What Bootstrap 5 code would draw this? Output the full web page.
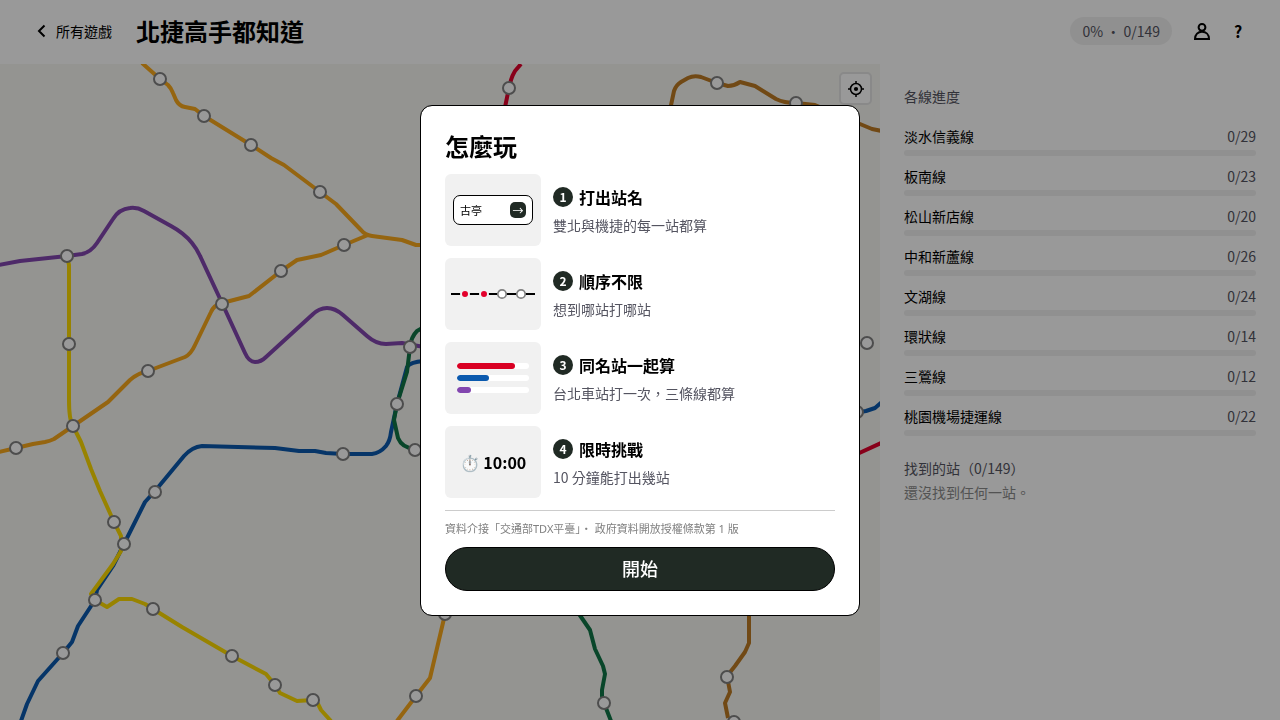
<!DOCTYPE html>
<html lang="zh-TW">
<head>
<meta charset="utf-8">
<meta name="viewport" content="width=device-width, initial-scale=1">
<title>北捷高手都知道</title>
<link href="https://cdn.jsdelivr.net/npm/bootstrap@5.3.0/dist/css/bootstrap.min.css" rel="stylesheet">
<style>
  body { font-family: "Noto Sans CJK TC", "Noto Sans", sans-serif; font-size: 14px; line-height: 20px; color: #000; }
  .site-title { font-size: 24px; line-height: 32px; }
  .site-header { height: 64px; padding: 0 24px 2px 32px; }
  .back-link { color: #000; text-decoration: none; }
  .score-pill { background: #f1f1f1; color: #545460; padding: 4px 12px; }
  .icon-btn { width: 36px; height: 36px; padding: 0; border: 0; font-size: 16px; line-height: 20px; color: #000; }
  .map-area { background: #f7f7f2; min-width: 0; }
  .map-area > svg { position: absolute; inset: 0; width: 100%; height: 100%; }
  .track { fill: none; stroke-width: 4; stroke-linejoin: round; }
  .stops circle { fill: #fff; stroke: #808080; stroke-width: 2; }
  .locate-btn { position: absolute; top: 8px; right: 8px; width: 33px; height: 33px; padding: 0; background: #fff; border: 2px solid #e4e4e4; border-radius: 5px; }
  .side-panel { width: 400px; padding: 20px 24px; }
  .muted-head { font-size: 14px; line-height: 24px; font-weight: 400; color: #545460; margin: 0; }
  .line-rows { margin: 18px 0 10px; }
  .line-row { height: 40px; }
  .line-row .progress { height: 6px; background: #f1f1f1; border-radius: 3px; margin-top: 4px; }
  .count { color: #545460; }
  .empty-note { color: #8a8a8a; line-height: 24px; }
  .intro-modal { background: rgba(0,0,0,.4); }
  .intro-modal .modal-dialog { max-width: 440px; }
  .intro-modal .modal-content { border: 1px solid #000; border-radius: 12px; padding: 24px; color: #000; }
  .steps { gap: 12px; margin: 12px 0; }
  .step-art { width: 96px; height: 72px; background: #f1f1f1; border-radius: 6px; }
  .step-head { gap: 6px; }
  .num { width: 20px; height: 20px; background: #202a24; color: #fff; font-size: 12px; }
  .step-name { font-size: 16px; line-height: 24px; }
  .step-text { color: #545460; margin: 6px 0 0; }
  .mini-input { width: 80px; height: 30px; border: 1px solid #000; border-radius: 7px; background: #fff; padding: 0 6px; font-size: 11px; }
  .mini-go { width: 16px; height: 16px; line-height: 16px; border-radius: 5px; background: #202a24; color: #fff; }
  .mini-bars { gap: 6px; }
  .mini-bar { width: 72px; height: 6px; border-radius: 3px; background: #fff; }
  .mini-bar .progress-bar { border-radius: 3px; }
  .credit { border-top: 1px solid #ccc; padding: 8px 0; font-family: "Noto Sans", "Noto Sans CJK TC", sans-serif; font-size: 11px; color: #808080; margin: 0; }
  .start-btn { height: 44px; padding: 0; font-size: 18px; font-weight: 500; color: #fff; background: #202a24; border: 1px solid #000; }
  .start-btn:hover { background: #303c35; color: #fff; }
</style>
</head>
<body>
<div class="d-flex flex-column vh-100 overflow-hidden">
  <header class="site-header d-flex align-items-center flex-shrink-0">
    <a href="#" class="back-link d-flex align-items-center gap-1 me-4">
      <svg width="20" height="20" viewBox="0 0 20 20" fill="none" stroke="#000" stroke-width="2" aria-hidden="true"><path d="M12.500 4.500 7 10l5.500 5.500"/></svg>
      <span>所有遊戲</span>
    </a>
    <h1 class="site-title fw-bold mb-0 me-auto">北捷高手都知道</h1>
    <span class="score-pill rounded-pill me-2">0% ・ 0/149</span>
    <div class="d-flex ms-1">
      <button type="button" class="btn icon-btn d-flex align-items-center justify-content-center" aria-label="帳號"><svg width="20" height="20" viewBox="0 0 20 20" fill="none" stroke="#000" stroke-width="2" aria-hidden="true"><circle cx="10" cy="6.300" r="3.400"/><path d="M3 18C3 13.500 6 10.700 10 10.700S17 13.500 17 18z"/></svg></button>
      <button type="button" class="btn icon-btn fw-bold d-flex align-items-center justify-content-center" aria-label="說明">?</button>
    </div>
  </header>
  <div class="d-flex flex-grow-1 overflow-hidden">
    <main class="map-area position-relative flex-grow-1 overflow-hidden">
      <svg viewBox="0 64 880 656" preserveAspectRatio="xMidYMid slice" role="img" aria-label="捷運路線圖">
        <g class="track">
          <path stroke="#f8a81c" d="M142 63 160 79 168 85Q171 88 173 93L176 100Q179 106 185 107L195 109 204 116 251 145 271 158 284 165 320 192 336 204 361 230Q365 235 372 236L402 240 416 245H424M368 235 344 245 321 255 297 260 281 271 249 296 222 303Q214 305 211 312L195 345Q191 354 185 357L177 360 148 371Q138 373 130 380L108 402 73 426 54 439Q50 441 45 442L33 444 16 448-1 452M446 610 430 678 416 696 397 721"/>
          <path stroke="#8246af" d="M-1 265 20 261 67 256 82 254Q91 252 97 243L113 219Q119 209 130 208 137 207 144 211L171 226Q184 233 192 243 197 249 201 258L222 303 245 353Q249 362 255 362 261 362 266 357L312 315Q319 308 327 308 335 308 343 315L367 336Q376 344 386 344L402 343 424 347"/>
          <path stroke="#0a59ae" d="M21 721 27 704 38 681 63 653 72 642 78 626 95 600 97 590 113 566 124 544 145 502 155 491 184 456Q192 447 202 446L275 448 299 451 315 451 326 453 343 454H372Q380 453 386 446 390 441 391 432L397 404 407 367Q410 362 424 361M855 413 866 411 875 408 882 402"/>
          <path stroke="#107547" d="M424 327 417 331Q411 337 410 347L407 372 397 404 394 420 398 438Q402 448 415 449M577 611 590 630 595 649 603 666 605 674 602 690V696L604 703 611 721"/>
          <path stroke="#fedb00" d="M67 256 69 265V344 400Q69 420 73 426L81 442 91 469 100 491 114 522 121 536V551L113 564 91 594 95 600 107 607 119 599H132L145 604 153 609 182 627 232 656 266 674 275 685 280 693 297 701 313 700 318 704 321 710 331 721"/>
          <path stroke="#bd7b24" d="M670 110 674 91Q676 85 681 82L688 78Q694 75 701 77L717 83 728 86Q734 86 740 82L755 86 776 99Q784 103 796 103L815 105 860 124 872 129 882 131M749 610V643L745 652 735 666 727 676 730 692 725 703 728 718"/>
          <path stroke="#e3002c" d="M521 64 515 71Q512 76 511 80L509 88 504 112M855 455 881 443"/>
        </g>
        <g class="stops">
          <circle cx="160" cy="79" r="6"/><circle cx="204" cy="116" r="6"/><circle cx="251" cy="145" r="6"/><circle cx="320" cy="192" r="6"/><circle cx="344" cy="245" r="6"/><circle cx="281" cy="271" r="6"/><circle cx="222" cy="304" r="6"/><circle cx="148" cy="371" r="6"/><circle cx="73" cy="426" r="6"/><circle cx="16" cy="448" r="6"/><circle cx="67" cy="256" r="6"/><circle cx="69" cy="344" r="6"/><circle cx="114" cy="522" r="6"/><circle cx="124" cy="544" r="6"/><circle cx="155" cy="492" r="6"/><circle cx="95" cy="600" r="6"/><circle cx="63" cy="653" r="6"/><circle cx="153" cy="609" r="6"/><circle cx="232" cy="656" r="6"/><circle cx="275" cy="685" r="6"/><circle cx="313" cy="700" r="6"/><circle cx="343" cy="454" r="6"/><circle cx="397" cy="404" r="6"/><circle cx="410" cy="347" r="6"/><circle cx="415" cy="450" r="6"/><circle cx="416" cy="696" r="6"/><circle cx="445" cy="614" r="6"/><circle cx="604" cy="703" r="6"/><circle cx="727" cy="677" r="6"/><circle cx="734" cy="722" r="6"/><circle cx="509" cy="88" r="6"/><circle cx="717" cy="83" r="6"/><circle cx="796" cy="103" r="6"/><circle cx="867" cy="343" r="6"/><circle cx="857" cy="412" r="6"/>
        </g>
      </svg>
      <button type="button" class="locate-btn d-flex align-items-center justify-content-center" aria-label="定位"><svg width="16" height="16" viewBox="0 0 16 16" fill="none" stroke="#000" stroke-width="1.500" aria-hidden="true"><circle cx="8" cy="8" r="5.500"/><circle cx="8" cy="8" r="2.100" fill="#000" stroke="none"/><path d="M8 0v3M8 13v3M0 8h3M13 8h3"/></svg></button>
    </main>
    <aside class="side-panel flex-shrink-0">
      <h2 class="muted-head">各線進度</h2>
      <div class="line-rows">
        <div class="line-row"><div class="d-flex justify-content-between"><span>淡水信義線</span><span class="count">0/29</span></div><div class="progress"></div></div>
        <div class="line-row"><div class="d-flex justify-content-between"><span>板南線</span><span class="count">0/23</span></div><div class="progress"></div></div>
        <div class="line-row"><div class="d-flex justify-content-between"><span>松山新店線</span><span class="count">0/20</span></div><div class="progress"></div></div>
        <div class="line-row"><div class="d-flex justify-content-between"><span>中和新蘆線</span><span class="count">0/26</span></div><div class="progress"></div></div>
        <div class="line-row"><div class="d-flex justify-content-between"><span>文湖線</span><span class="count">0/24</span></div><div class="progress"></div></div>
        <div class="line-row"><div class="d-flex justify-content-between"><span>環狀線</span><span class="count">0/14</span></div><div class="progress"></div></div>
        <div class="line-row"><div class="d-flex justify-content-between"><span>三鶯線</span><span class="count">0/12</span></div><div class="progress"></div></div>
        <div class="line-row"><div class="d-flex justify-content-between"><span>桃園機場捷運線</span><span class="count">0/22</span></div><div class="progress"></div></div>
      </div>
      <h2 class="muted-head">找到的站（0/149）</h2>
      <p class="empty-note mb-0">還沒找到任何一站。</p>
    </aside>
  </div>
</div>

<div class="modal d-block intro-modal" role="dialog" aria-modal="true" aria-labelledby="introTitle">
  <div class="modal-dialog modal-dialog-centered">
    <div class="modal-content">
      <h2 id="introTitle" class="site-title fw-bold mb-0">怎麼玩</h2>
      <div class="steps d-flex flex-column">
        <div class="d-flex align-items-center">
          <div class="step-art d-flex align-items-center justify-content-center flex-shrink-0">
            <div class="mini-input d-flex align-items-center justify-content-between"><span>古亭</span><span class="mini-go text-center">→</span></div>
          </div>
          <div class="ms-2 ps-1">
            <div class="step-head d-flex align-items-center"><span class="num rounded-circle fw-bold text-center">1</span><strong class="step-name fw-bold">打出站名</strong></div>
            <p class="step-text">雙北與機捷的每一站都算</p>
          </div>
        </div>
        <div class="d-flex align-items-center">
          <div class="step-art d-flex align-items-center justify-content-center flex-shrink-0">
            <svg width="84" height="12" viewBox="0 0 84 12" aria-hidden="true"><path d="M0 6h84" stroke="#000" stroke-width="2"/><g stroke="#f1f1f1" stroke-width="2" fill="#e3002c"><circle cx="14" cy="6" r="4"/><circle cx="33" cy="6" r="4"/></g><g stroke="#808080" stroke-width="1.700" fill="#fff"><circle cx="51" cy="6" r="4.200"/><circle cx="70" cy="6" r="4.200"/></g></svg>
          </div>
          <div class="ms-2 ps-1">
            <div class="step-head d-flex align-items-center"><span class="num rounded-circle fw-bold text-center">2</span><strong class="step-name fw-bold">順序不限</strong></div>
            <p class="step-text">想到哪站打哪站</p>
          </div>
        </div>
        <div class="d-flex align-items-center">
          <div class="step-art mini-bars d-flex flex-column align-items-center justify-content-center flex-shrink-0">
            <div class="mini-bar progress"><div class="progress-bar" style="width:80%;background:#d90023"></div></div>
            <div class="mini-bar progress"><div class="progress-bar" style="width:45%;background:#0a59ae"></div></div>
            <div class="mini-bar progress"><div class="progress-bar" style="width:20%;background:#8246af"></div></div>
          </div>
          <div class="ms-2 ps-1">
            <div class="step-head d-flex align-items-center"><span class="num rounded-circle fw-bold text-center">3</span><strong class="step-name fw-bold">同名站一起算</strong></div>
            <p class="step-text">台北車站打一次，三條線都算</p>
          </div>
        </div>
        <div class="d-flex align-items-center">
          <div class="step-art d-flex align-items-center justify-content-center flex-shrink-0 step-name fw-bold">⏱️ 10:00</div>
          <div class="ms-2 ps-1">
            <div class="step-head d-flex align-items-center"><span class="num rounded-circle fw-bold text-center">4</span><strong class="step-name fw-bold">限時挑戰</strong></div>
            <p class="step-text">10 分鐘能打出幾站</p>
          </div>
        </div>
      </div>
      <p class="credit">資料介接「交通部TDX平臺」・ 政府資料開放授權條款第 1 版</p>
      <button type="button" class="btn start-btn rounded-pill w-100">開始</button>
    </div>
  </div>
</div>
<script src="https://cdn.jsdelivr.net/npm/bootstrap@5.3.0/dist/js/bootstrap.bundle.min.js"></script>
</body>
</html>
